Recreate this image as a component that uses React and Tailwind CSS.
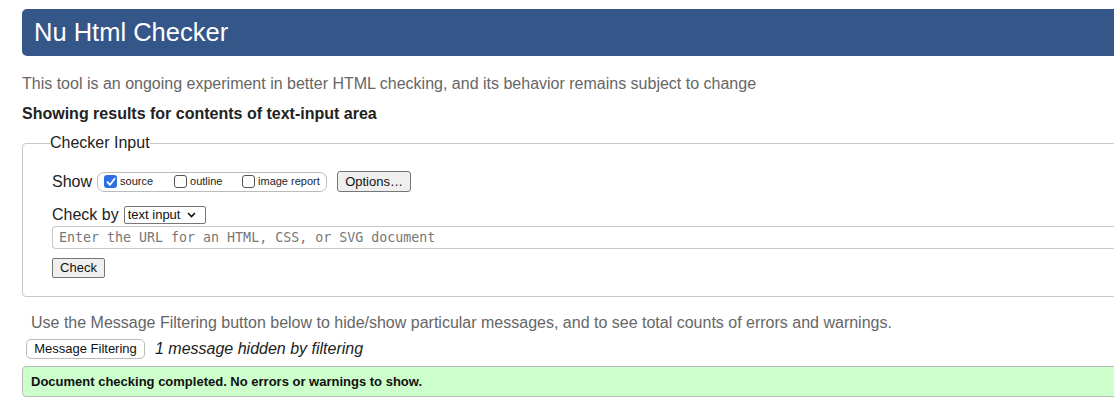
import React from "react";

function Box({ checked, label }) {
  return (
    <label className="flex items-center">
      <span
        className={
          checked
            ? "w-[13px] h-[13px] rounded-[3px] bg-[#2f6fe4] flex items-center justify-center"
            : "w-[13px] h-[13px] rounded-[3px] border border-[#555] bg-white"
        }
      >
        {checked ? (
          <svg width="10" height="10" viewBox="0 0 10 10">
            <path d="M1.5 5.2 L4 7.8 L8.6 1.8" fill="none" stroke="white" strokeWidth="1.8" strokeLinecap="round" strokeLinejoin="round" />
          </svg>
        ) : null}
      </span>
      <span className="ml-[3px] text-[11px] text-[#222]">{label}</span>
    </label>
  );
}

export default function App() {
  return (
    <div className="w-full h-[408px] overflow-hidden bg-white font-['Liberation_Sans',Arial,sans-serif] text-[#222]">
      <div className="w-[1200px] pl-[22px] pt-[9px]">
        <h1 className="h-[47px] rounded-[5px] bg-[#355689] text-white text-[25.5px] pl-[12px] flex items-center">
          Nu Html Checker
        </h1>

        <p className="mt-[19px] text-[16px] leading-[18px] text-[#666]">
          This tool is an ongoing experiment in better HTML checking, and its behavior remains subject to change
        </p>
        <p className="mt-[12px] text-[16px] leading-[18px] font-bold">Showing results for contents of text-input area</p>

        <fieldset className="mt-[11px] border border-[#c8c8c8] rounded-[4px] pl-[29px] pr-0 pb-[17px] h-[163px]">
          <legend className="-ml-[2px] px-0 text-[16px] leading-[18px] text-[#222]">Checker Input</legend>

          <div className="mt-[19px] flex items-center">
            <span className="text-[16px] leading-[18px]">Show</span>
            <div className="ml-[5px] h-[20px] w-[230px] border border-[#bbb] rounded-[7px] flex items-center pl-[6px] gap-0">
              <div className="w-[70px]"><Box checked label="source" /></div>
              <div className="w-[68px]"><Box label="outline" /></div>
              <Box label="image report" />
            </div>
            <button className="ml-[10px] h-[21px] w-[74px] border border-[#767676] rounded-[3px] bg-[#efefef] text-[13px] text-[#111] flex items-center justify-center">
              Options…
            </button>
          </div>

          <div className="mt-[14px] flex items-center">
            <span className="text-[16px] leading-[18px]">Check by</span>
            <div className="ml-[5px] h-[18px] w-[82px] border border-[#767676] rounded-[2px] flex items-center pl-[3px] text-[13px] text-[#111]">
              <span>text input</span>
              <svg className="ml-[7px]" width="9" height="6" viewBox="0 0 9 6">
                <path d="M1 1 L4.5 4.5 L8 1" fill="none" stroke="#111" strokeWidth="1.6" />
              </svg>
            </div>
          </div>

          <div className="mt-[2px] h-[23px] border border-[#c8c8c8] rounded-l-[4px] border-r-0 flex items-center pl-[6px] font-['DejaVu_Sans_Mono',monospace] text-[13.3px] text-[#777]">
            Enter the URL for an HTML, CSS, or SVG document
          </div>

          <button className="mt-[9px] h-[20px] w-[53px] border border-[#767676] rounded-[2px] bg-[#efefef] text-[13px] text-[#111] flex items-center justify-center">
            Check
          </button>
        </fieldset>

        <p className="mt-[17px] ml-[9px] text-[16px] leading-[18px] text-[#666]">
          Use the Message Filtering button below to hide/show particular messages, and to see total counts of errors and warnings.
        </p>

        <div className="mt-[7px] ml-[4px] flex items-center">
          <button className="h-[20px] w-[119px] border border-[#bbb] rounded-[5px] bg-white text-[13px] text-[#111] flex items-center justify-center">
            Message Filtering
          </button>
          <span className="ml-[10px] italic text-[16px] leading-[18px]">1 message hidden by filtering</span>
        </div>

        <div className="mt-[7px] h-[31px] border border-[#bbb] rounded-[4px] bg-[#ccffcc] flex items-center pl-[8px] text-[13px] font-bold text-[#111]">
          Document checking completed. No errors or warnings to show.
        </div>
      </div>
    </div>
  );
}
